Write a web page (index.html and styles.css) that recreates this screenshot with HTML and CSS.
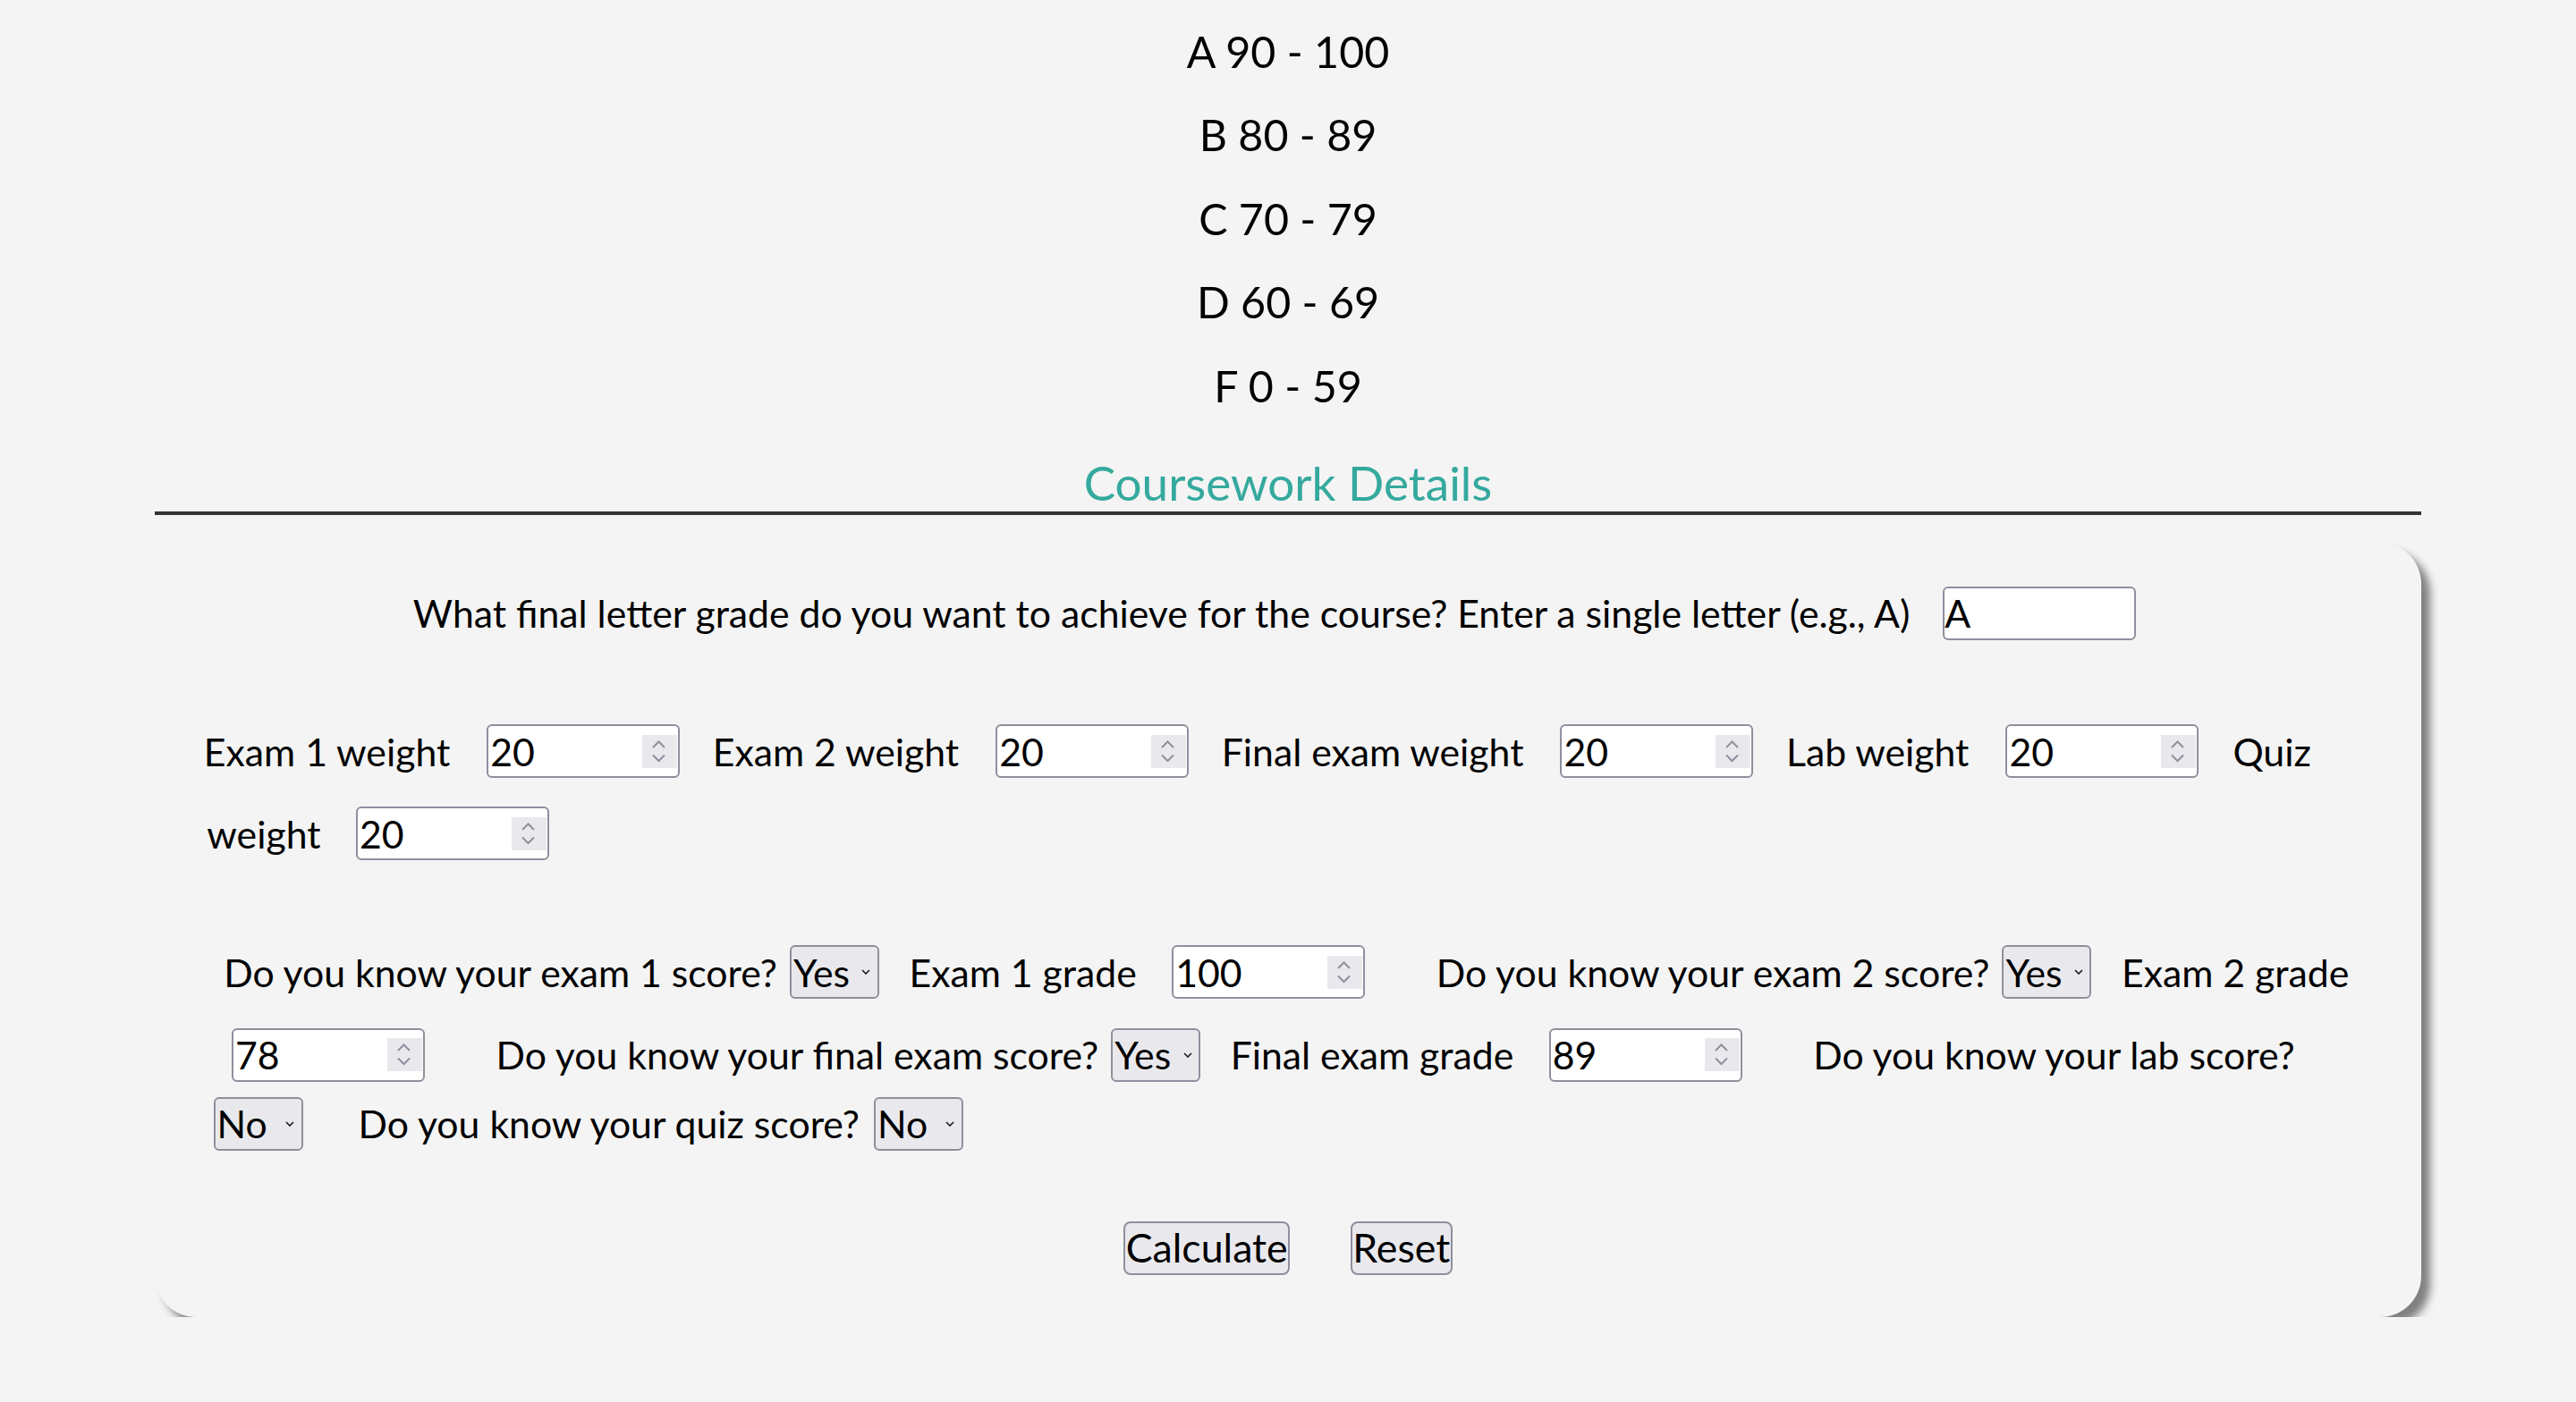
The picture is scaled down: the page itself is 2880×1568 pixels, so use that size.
FILE: index.html
```html
<!DOCTYPE html>
<html lang="en">
<head>
<meta charset="utf-8">
<title>Grade Calculator</title>
<link rel="stylesheet" href="styles.css">
</head>
<body>
<main class="page">
  <section class="scale">
    <p class="scale-row">A 90 - 100</p>
    <p class="scale-row">B 80 - 89</p>
    <p class="scale-row">C 70 - 79</p>
    <p class="scale-row">D 60 - 69</p>
    <p class="scale-row">F 0 - 59</p>
  </section>

  <h2 class="section-title">Coursework Details</h2>

  <form class="card">
    <div class="row row-goal">
      <label for="goal">What final letter grade do you want to achieve for the course? Enter a single letter (e.g., A)</label>
      <input class="text-field m-goal" id="goal" type="text" value="A">
    </div>

    <div class="row row-w1">
      <label>Exam 1 weight</label>
      <span class="num m-input"><input value="20"><svg class="spin" viewBox="0 0 39 37" width="39" height="37" aria-hidden="true"><rect width="39" height="37" fill="#e9e9ed"/><path d="M12 14 L18.5 7.5 L25 14 M12 22.5 L18.5 29 L25 22.5" fill="none" stroke="#8f8f9d" stroke-width="2"/></svg></span>
      <label class="m-label">Exam 2 weight</label>
      <span class="num m-input"><input value="20"><svg class="spin" viewBox="0 0 39 37" width="39" height="37" aria-hidden="true"><rect width="39" height="37" fill="#e9e9ed"/><path d="M12 14 L18.5 7.5 L25 14 M12 22.5 L18.5 29 L25 22.5" fill="none" stroke="#8f8f9d" stroke-width="2"/></svg></span>
      <label class="m-label">Final exam weight</label>
      <span class="num m-input"><input value="20"><svg class="spin" viewBox="0 0 39 37" width="39" height="37" aria-hidden="true"><rect width="39" height="37" fill="#e9e9ed"/><path d="M12 14 L18.5 7.5 L25 14 M12 22.5 L18.5 29 L25 22.5" fill="none" stroke="#8f8f9d" stroke-width="2"/></svg></span>
      <label class="m-label">Lab weight</label>
      <span class="num m-input"><input value="20"><svg class="spin" viewBox="0 0 39 37" width="39" height="37" aria-hidden="true"><rect width="39" height="37" fill="#e9e9ed"/><path d="M12 14 L18.5 7.5 L25 14 M12 22.5 L18.5 29 L25 22.5" fill="none" stroke="#8f8f9d" stroke-width="2"/></svg></span>
      <label class="m-quiz">Quiz</label>
    </div>
    <div class="row row-w2">
      <label>weight</label>
      <span class="num m-input-short"><input value="20"><svg class="spin" viewBox="0 0 39 37" width="39" height="37" aria-hidden="true"><rect width="39" height="37" fill="#e9e9ed"/><path d="M12 14 L18.5 7.5 L25 14 M12 22.5 L18.5 29 L25 22.5" fill="none" stroke="#8f8f9d" stroke-width="2"/></svg></span>
    </div>

    <div class="row row-s1">
      <label>Do you know your exam 1 score?</label>
      <span class="sel m-sel"><select><option selected>Yes</option><option>No</option></select><svg class="chev" viewBox="0 0 10 6" width="10" height="6" aria-hidden="true"><path d="M1 1 L5 5 L9 1" fill="none" stroke="#1a1a1a" stroke-width="1.6"/></svg></span>
      <label class="m-grade">Exam 1 grade</label>
      <span class="num m-grade-input"><input value="100"><svg class="spin" viewBox="0 0 39 37" width="39" height="37" aria-hidden="true"><rect width="39" height="37" fill="#e9e9ed"/><path d="M12 14 L18.5 7.5 L25 14 M12 22.5 L18.5 29 L25 22.5" fill="none" stroke="#8f8f9d" stroke-width="2"/></svg></span>
      <label class="m-q">Do you know your exam 2 score?</label>
      <span class="sel m-sel"><select><option selected>Yes</option><option>No</option></select><svg class="chev" viewBox="0 0 10 6" width="10" height="6" aria-hidden="true"><path d="M1 1 L5 5 L9 1" fill="none" stroke="#1a1a1a" stroke-width="1.6"/></svg></span>
      <label class="m-grade">Exam 2 grade</label>
    </div>
    <div class="row row-s2">
      <span class="num"><input value="78"><svg class="spin" viewBox="0 0 39 37" width="39" height="37" aria-hidden="true"><rect width="39" height="37" fill="#e9e9ed"/><path d="M12 14 L18.5 7.5 L25 14 M12 22.5 L18.5 29 L25 22.5" fill="none" stroke="#8f8f9d" stroke-width="2"/></svg></span>
      <label class="m-q">Do you know your final exam score?</label>
      <span class="sel m-sel"><select><option selected>Yes</option><option>No</option></select><svg class="chev" viewBox="0 0 10 6" width="10" height="6" aria-hidden="true"><path d="M1 1 L5 5 L9 1" fill="none" stroke="#1a1a1a" stroke-width="1.6"/></svg></span>
      <label class="m-grade">Final exam grade</label>
      <span class="num m-grade-input"><input value="89"><svg class="spin" viewBox="0 0 39 37" width="39" height="37" aria-hidden="true"><rect width="39" height="37" fill="#e9e9ed"/><path d="M12 14 L18.5 7.5 L25 14 M12 22.5 L18.5 29 L25 22.5" fill="none" stroke="#8f8f9d" stroke-width="2"/></svg></span>
      <label class="m-q">Do you know your lab score?</label>
    </div>
    <div class="row row-s3">
      <span class="sel"><select><option>Yes</option><option selected>No</option></select><svg class="chev" viewBox="0 0 10 6" width="10" height="6" aria-hidden="true"><path d="M1 1 L5 5 L9 1" fill="none" stroke="#1a1a1a" stroke-width="1.6"/></svg></span>
      <label class="m-q-after-sel">Do you know your quiz score?</label>
      <span class="sel m-sel-wide"><select><option>Yes</option><option selected>No</option></select><svg class="chev" viewBox="0 0 10 6" width="10" height="6" aria-hidden="true"><path d="M1 1 L5 5 L9 1" fill="none" stroke="#1a1a1a" stroke-width="1.6"/></svg></span>
    </div>

    <div class="row row-actions">
      <button class="btn" type="button">Calculate</button>
      <button class="btn" type="reset">Reset</button>
    </div>
  </form>
</main>
</body>
</html>
```

FILE: styles.css
```css
* {
  box-sizing: border-box;
}

html,
body {
  margin: 0;
}

body {
  background: #f4f4f4;
  color: #000;
  font-family: Lato, "Noto Sans", sans-serif;
  font-size: 42.75px;
}

.page {
  margin: 0 173px;
}

/* grade scale */
.scale {
  padding-top: 10.5px;
  text-align: center;
}

.scale-row {
  margin: 0;
  font-size: 48.4px;
  line-height: 93.5px;
}

.section-title {
  margin: 30.4px 0 0;
  font-size: 53px;
  font-weight: 400;
  line-height: 1.2;
  color: #35a99e;
  text-align: center;
  border-bottom: 4px solid #333;
}

/* card */
.card {
  margin-top: 31px;
  padding: 49px 0 47px;
  border-radius: 46px;
  background: #f4f4f4;
  box-shadow: 10px 10px 10px #808080;
}

.row {
  display: flex;
  align-items: center;
  height: 60px;
  white-space: nowrap;
  line-height: 1.2;
}

.row-goal {
  justify-content: center;
  padding-right: 30px;
}

.row-w1 {
  margin-top: 94.5px;
  padding-left: 54.85px;
}

.row-w2 {
  margin-top: 32px;
  padding-left: 58.3px;
}

.row-s1 {
  margin-top: 95px;
  padding-left: 77.2px;
}

.row-s2 {
  margin-top: 32.5px;
  padding-left: 86px;
}

.row-s3 {
  margin-top: 17px;
  padding-left: 65.6px;
}

.row-actions {
  margin-top: 79px;
  justify-content: center;
  gap: 67.5px;
}

/* spacing between items on a line */
.m-goal { margin-left: 36.7px; }
.m-input { margin-left: 41px; }
.m-input-short { margin-left: 39.5px; }
.m-label { margin-left: 36.5px; }
.m-quiz { margin-left: 38px; }
.m-sel { margin-left: 14px; }
.m-sel-wide { margin-left: 16px; }
.m-grade { margin-left: 33.5px; }
.m-grade-input { margin-left: 39.5px; }
.m-q { margin-left: 79.5px; }
.m-q-after-sel { margin-left: 62px; }

/* controls */
.text-field {
  flex: none;
  width: 216px;
  height: 60px;
  padding: 0;
  border: 2px solid #8f8f9d;
  border-radius: 6px;
  background: #fff;
  font: inherit;
  color: #000;
  outline: none;
}

.num {
  display: inline-flex;
  align-items: center;
  flex: none;
  width: 216px;
  height: 60px;
  border: 2px solid #8f8f9d;
  border-radius: 6px;
  background: #fff;
}

.num input {
  flex: 1;
  min-width: 0;
  height: 100%;
  padding: 0 0 0 2px;
  border: 0;
  background: transparent;
  font: inherit;
  color: #000;
  outline: none;
}

.spin {
  display: block;
  flex: none;
  margin-right: 1px;
}

.sel {
  display: inline-flex;
  align-items: center;
  flex: none;
  width: 100px;
  height: 60px;
  border: 2px solid #8f8f9d;
  border-radius: 6px;
  background: #e9e9ed;
}

.sel select {
  -webkit-appearance: none;
  appearance: none;
  flex: 1;
  min-width: 0;
  height: 100%;
  margin: 0;
  padding: 0 0 0 2px;
  border: 0;
  background: transparent;
  font: inherit;
  color: #000;
  outline: none;
}

.chev {
  display: block;
  flex: none;
  margin-right: 7.5px;
}

.btn {
  height: 60px;
  margin: 0;
  padding: 0 0.6px;
  border: 2px solid #8f8f9d;
  border-radius: 8px;
  background: #e9e9ed;
  font-family: inherit;
  font-size: 44.7px;
  color: #000;
  line-height: 1.2;
}
```
